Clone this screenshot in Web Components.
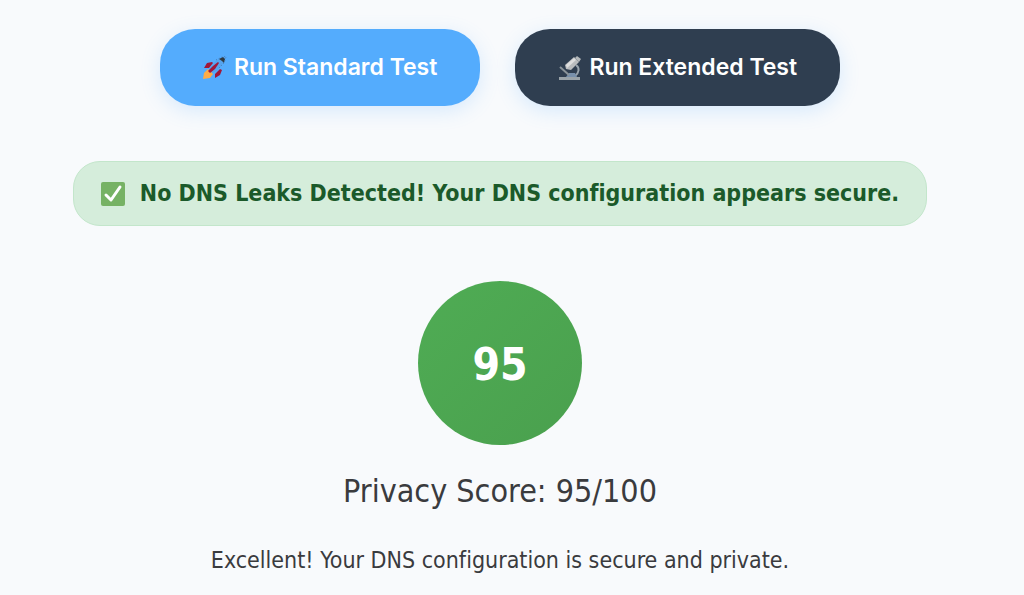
<!DOCTYPE html>
<html lang="en">
<head>
<meta charset="utf-8">
<title>DNS Leak Test</title>
<style>
body { margin: 0; background: #f8fafc; color: #3a3b3e; font-family: "DejaVu Sans Condensed", Tahoma, "Noto Sans", sans-serif; font-variant-ligatures: none; }
</style>
</head>
<body>
<leak-test-page>
  <test-button slot="actions">
    <svg slot="icon" viewBox="0 0 24 24" width="24" height="24" aria-hidden="true">
      <path fill="#55a3ee" d="M6 15L9 8l8-6 5-1-1 5-6 8-7 4z"/>
      <path fill="#a0173a" d="M1 12l3-5 5-1 1 1-4 5zM12 22v-4l5-5 2 1-2 5z"/>
      <path fill="#ffac46" d="M0 23l1-6 4-4 5 5-3 4z"/>
      <path fill="#a0173a" d="M5 15l5-5 5-4 1 1-4 6-5 4z"/>
      <path fill="#2f3a42" d="M16 3l4-2 2 2-1 4-2-2z"/>
      <path fill="none" stroke="#477cb5" stroke-dasharray="1 2" d="M13 4l6-3 4-1M16 12l5-5 2-6"/>
    </svg>
    Run Standard Test
  </test-button>
  <test-button slot="actions" tone="dark">
    <svg slot="icon" viewBox="0 0 24 24" width="24" height="24" aria-hidden="true">
      <path fill="none" stroke="#98a3ac" stroke-width="2" d="M18 9c4 3 3 8-1 11"/>
      <path fill="#9aa3a9" d="M1 21h21v3H1z"/>
      <path fill="#7890ab" d="M8 21l3-4h6l2 4z"/>
      <path stroke="#8b949a" stroke-width="2" d="M2 11l9 8"/>
      <path fill="#b9bcbe" d="M7 9l9-8 5 5-8 8-5-1z"/>
      <path fill="#dedede" d="M8 9l8-7 2 2-9 8z"/>
      <path fill="#b4b8ba" d="M17 2l2-2 4 3-2 3z"/>
    </svg>
    Run Extended Test
  </test-button>
  <status-banner slot="status">No DNS Leaks Detected! Your DNS configuration appears secure.</status-banner>
  <privacy-score slot="score" value="95">Excellent! Your DNS configuration is secure and private.</privacy-score>
</leak-test-page>

<script>
class LeakTestPage extends HTMLElement {
  constructor() {
    super();
    this.attachShadow({ mode: "open" }).innerHTML = `
      <style>
        :host { display: block; }
        main { display: flex; flex-direction: column; align-items: center; gap: 55px; padding: 29px 24px 16px 0; }
        nav { display: flex; flex-wrap: wrap; justify-content: center; gap: 35px; }
      </style>
      <main>
        <nav aria-label="Tests"><slot name="actions"></slot></nav>
        <slot name="status"></slot>
        <slot name="score"></slot>
      </main>`;
  }
}
class TestButton extends HTMLElement {
  constructor() {
    super();
    this.attachShadow({ mode: "open" }).innerHTML = `
      <style>
        :host { display: block; }
        button { display: flex; align-items: center; gap: 7px; margin: 0; padding: 24px 43px; border: 0; border-radius: 35px;
          background: #54acfd; color: #fff; font: 600 23px/29px Inter, sans-serif; white-space: nowrap;
          box-shadow: 0 5px 20px rgba(84, 172, 253, .2); cursor: pointer; }
        :host([tone="dark"]) button { background: #2f3e50; }
      </style>
      <button type="button"><slot name="icon"></slot><span><slot></slot></span></button>`;
  }
}
class StatusBanner extends HTMLElement {
  constructor() {
    super();
    this.attachShadow({ mode: "open" }).innerHTML = `
      <style>
        :host { display: block; }
        div { display: flex; align-items: center; gap: 15px; padding: 16px 27px; border: 1px solid #c3e6cb; border-radius: 27px;
          background: #d5eddb; color: #1b5a2a; font-size: 23px; line-height: 31px; font-weight: 700; }
        svg { flex: none; }
      </style>
      <div role="status">
        <svg viewBox="0 0 24 24" width="24" height="24" aria-hidden="true">
          <rect width="24" height="24" rx="2" fill="#76b264"/>
          <path d="M5 13l5 5L19 5" fill="none" stroke="#fff" stroke-width="3" stroke-linecap="round" stroke-linejoin="round"/>
        </svg>
        <span><slot></slot></span>
      </div>`;
  }
}
class PrivacyScore extends HTMLElement {
  constructor() {
    super();
    const value = this.getAttribute("value");
    this.attachShadow({ mode: "open" }).innerHTML = `
      <style>
        :host { display: flex; flex-direction: column; align-items: center; text-align: center; }
        .badge { display: flex; align-items: center; justify-content: center; box-sizing: border-box; width: 164px; height: 164px; padding-top: 4px; border-radius: 50%;
          background: linear-gradient(135deg, #4fac54, #4aa04e); color: #fff; font-size: 44px; line-height: 52px; font-weight: 700; }
        h2 { margin: 26px 0 0; font-size: 32px; line-height: 40px; font-weight: 400; }
        p { margin: 34px 0 0; font-size: 23px; line-height: 30px; }
      </style>
      <div class="badge">${value}</div>
      <h2>Privacy Score: ${value}/100</h2>
      <p><slot></slot></p>`;
  }
}
customElements.define("leak-test-page", LeakTestPage);
customElements.define("test-button", TestButton);
customElements.define("status-banner", StatusBanner);
customElements.define("privacy-score", PrivacyScore);
</script>
</body>
</html>
